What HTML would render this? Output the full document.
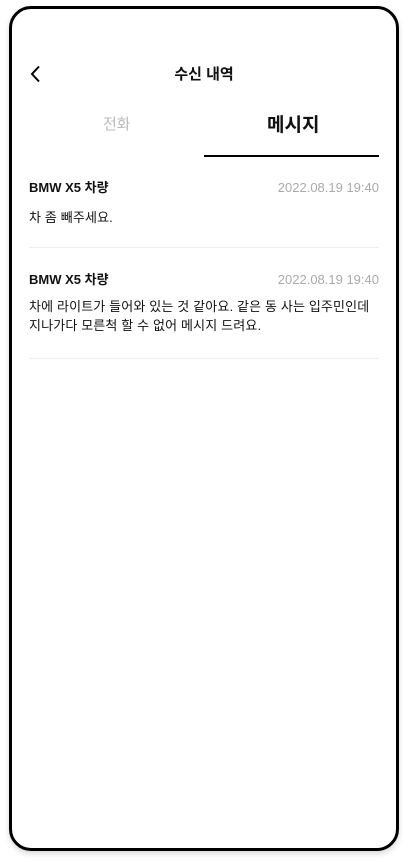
<!DOCTYPE html>
<html><head><meta charset="utf-8"><style>
*{margin:0;padding:0;box-sizing:border-box}
body{width:408px;height:862px;background:#fff;font-family:"Liberation Sans","Noto Sans CJK KR",sans-serif;position:relative;overflow:hidden;color:#111}
.frame{position:absolute;left:9px;top:6px;width:390px;height:845px;border:3.5px solid #000;border-radius:22px;box-shadow:0 3px 6px rgba(0,0,0,.15);background:#fff}
.abs{position:absolute}
.title{left:0;width:408px;top:63px;text-align:center;font-size:15px;font-weight:bold}
.tab{font-size:15px;top:113px}
.row{left:29px;width:360px}
.name{font-size:13px;font-weight:bold}
.date{font-size:13px;color:#aaa;right:29px}
.msg{font-size:13px;line-height:19px;letter-spacing:0.15px}
.hr{left:29px;width:350px;height:1px;background:#eee}
</style></head><body>
<div class="frame"></div>
<svg class="abs" style="left:29px;top:65px" width="14" height="18" viewBox="0 0 14 18"><path d="M10 1.5 L3 9 L10 16.5" fill="none" stroke="#000" stroke-width="2"/></svg>
<div class="abs title">수신 내역</div>
<div class="abs tab" style="left:103px;color:#bbb">전화</div>
<div class="abs" style="left:267px;top:110px;font-size:19px;font-weight:bold">메시지</div>
<div class="abs" style="left:204px;top:155px;width:175px;height:2px;background:#000"></div>
<div class="abs row name" style="top:177px">BMW X5 차량</div>
<div class="abs date" style="top:180px">2022.08.19 19:40</div>
<div class="abs row msg" style="top:208px">차 좀 빼주세요.</div>
<div class="abs hr" style="top:247px"></div>
<div class="abs row name" style="top:269px">BMW X5 차량</div>
<div class="abs date" style="top:272px">2022.08.19 19:40</div>
<div class="abs row msg" style="top:297px">차에 라이트가 들어와 있는 것 같아요. 같은 동 사는 입주민인데<br>지나가다 모른척 할 수 없어 메시지 드려요.</div>
<div class="abs hr" style="top:358px"></div>
</body></html>
